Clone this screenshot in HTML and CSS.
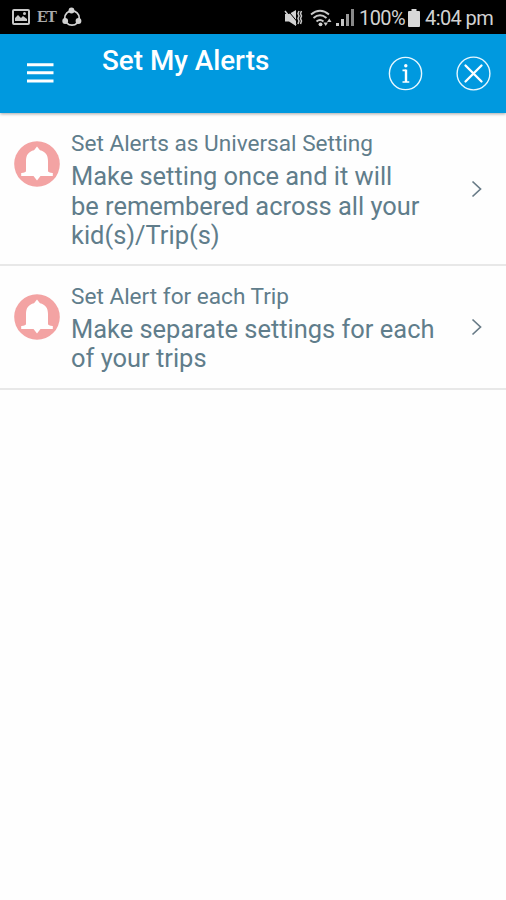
FILE: index.html
```html
<!DOCTYPE html>
<html lang="en">
<head>
    <meta charset="UTF-8">
    <meta name="viewport" content="width=device-width, initial-scale=1.0">
    <title>Set My Alerts</title>
    <link rel="stylesheet" href="styles.css">
</head>
<body>

    <div class="status-bar">
        <div class="status-left">
            <svg width="18" height="16" viewBox="0 0 18 16">
                <rect x="1" y="1" width="16" height="14" rx="1" fill="none" stroke="#c8c8c8" stroke-width="2"/>
                <path d="M3 12V9l3-3 3 3 2-2 4 3v2z" fill="#c8c8c8"/>
                <circle cx="12.500" cy="4.500" r="1.500" fill="#c8c8c8"/>
            </svg>
            <span class="status-et">ET</span>
            <svg width="20" height="20" viewBox="0 0 20 20">
                <circle cx="10" cy="11" r="7.200" fill="none" stroke="#d2d2d2" stroke-width="1.700"/>
                <circle cx="9.500" cy="3.500" r="2.900" fill="#d2d2d2"/>
                <circle cx="3.200" cy="14" r="2.900" fill="#d2d2d2"/>
                <circle cx="16.500" cy="14" r="2.900" fill="#d2d2d2"/>
            </svg>
        </div>
        <div class="status-right">
            <svg class="mute-icon" width="19" height="18" viewBox="0 0 19 18">
                <path d="M1 5h4l7-4v16l-7-4.500H1z" fill="#d2d2d2"/>
                <path d="M3.500 1l9.500 11.500" stroke="#000" stroke-width="1"/>
                <path d="M1 2l11 14" stroke="#d2d2d2" stroke-width="1.500"/>
                <path d="M15 2l-1 2.500L15 7l-1 2.500 1 2.500-1 3M17.500 2l-1 2.500 1 2.500-1 2.500 1 2.500-1 3" fill="none" stroke="#c8c8c8" stroke-width="1.500"/>
            </svg>
            <svg class="wifi-icon" width="23" height="18" viewBox="0 0 23 18">
                <path d="M1 5.500Q10-2 19 5.500M3.500 9q6.500-5.500 13 0M6.500 12.500q3.500-3 7 0" fill="none" stroke="#c8c8c8" stroke-width="1.900"/>
                <circle cx="10.500" cy="15.300" r="1.900" fill="#d2d2d2"/>
                <path d="M13.500 13.500h4.500L15.700 17zM17 13l2.300-3.500L21.500 13z" fill="#c8c8c8"/>
            </svg>
            <svg class="signal-icon" width="18" height="17" viewBox="0 0 18 17">
                <path d="M0 14h3v3H0zM5 10h3v7H5z" fill="#c8c8c8"/>
                <path d="M10 5h3v12h-3z" fill="#999"/>
                <path d="M15 0h3v17h-3z" fill="#888"/>
            </svg>
            <span class="battery-text">100%</span>
            <svg class="battery-icon" width="12" height="18" viewBox="0 0 12 18">
                <path d="M3.500 0h5v2H11q1 0 1 1v14q0 1-1 1H1q-1 0-1-1V3q0-1 1-1h2.500z" fill="#d8d8d8"/>
            </svg>
            <span class="clock">4:04 pm</span>
        </div>
    </div>

    <header class="toolbar">
        <svg class="menu-icon" width="27" height="20" viewBox="0 0 27 20">
            <path d="M0 1.700h26.500M0 9.800h26.500M0 18h26.500" stroke="#fff" stroke-width="3"/>
        </svg>
        <h1>Set My Alerts</h1>
        <svg class="info-icon" width="35" height="35" viewBox="0 0 35 35">
            <circle cx="17.500" cy="17.500" r="16.100" fill="none" stroke="#e6f7ff" stroke-width="1.400"/>
            <circle cx="17.800" cy="9.800" r="1.700" fill="#fff"/>
            <path d="M14.500 14.400h3.600M14.500 26h6.800" fill="none" stroke="#fff" stroke-width="1.600"/>
            <path d="M18 13.600v12.400" stroke="#fff" stroke-width="2.400"/>
        </svg>
        <svg class="close-icon" width="35" height="35" viewBox="0 0 35 35">
            <circle cx="17.500" cy="17.500" r="16.400" fill="none" stroke="#e6f7ff" stroke-width="1.400"/>
            <path d="M9.500 9.500l16 16M25.500 9.500l-16 16" stroke="#fff" stroke-width="2.300" stroke-linecap="round"/>
        </svg>
    </header>

    <main class="alert-list">
        <div class="alert-row">
            <svg class="bell-icon" width="46" height="46" viewBox="0 0 46 46">
                <circle cx="23" cy="23" r="22.800" fill="#f3a3a3"/>
                <path d="M23 5.500l3 3.700C31.500 10.500 34 14 34 20v10q0 1.500 4.800 2v3H26.500L23 39.500 19.500 35H7.200v-3q4.800-.5 4.800-2V20c0-6 2.500-9.500 8-10.800z" fill="#fff"/>
            </svg>
            <div class="alert-text">
                <h2>Set Alerts as Universal Setting</h2>
                <p>Make setting once and it will<br>be remembered across all your<br>kid(s)/Trip(s)</p>
            </div>
            <svg class="chevron" width="11" height="18" viewBox="0 0 11 18">
                <path d="M1.500 1.500L9.500 9l-8 7.500" fill="none" stroke="#687b87" stroke-width="1.700"/>
            </svg>
        </div>
        <div class="alert-row">
            <svg class="bell-icon" width="46" height="46" viewBox="0 0 46 46">
                <circle cx="23" cy="23" r="22.800" fill="#f3a3a3"/>
                <path d="M23 5.500l3 3.700C31.500 10.500 34 14 34 20v10q0 1.500 4.800 2v3H26.500L23 39.500 19.500 35H7.200v-3q4.800-.5 4.800-2V20c0-6 2.500-9.500 8-10.800z" fill="#fff"/>
            </svg>
            <div class="alert-text">
                <h2>Set Alert for each Trip</h2>
                <p>Make separate settings for each<br>of your trips</p>
            </div>
            <svg class="chevron" width="11" height="18" viewBox="0 0 11 18">
                <path d="M1.500 1.500L9.500 9l-8 7.500" fill="none" stroke="#687b87" stroke-width="1.700"/>
            </svg>
        </div>
    </main>

</body>
</html>
```
FILE: styles.css
```css
body {
    font-family: Roboto, sans-serif;
    margin: 0;
    padding: 0;
    background: #fefefe;
    color: #607d8b;
}
svg {
    display: block;
    flex: none;
}
.status-bar {
    display: flex;
    justify-content: space-between;
    align-items: center;
    height: 34px;
    padding: 0 13px 0 12px;
    box-sizing: border-box;
    background: #000;
    color: #d2d2d2;
    font-size: 20px;
    letter-spacing: -0.6px;
    white-space: nowrap;
}
.status-left, .status-right {
    display: flex;
    align-items: center;
}
.status-right {
    padding-top: 1px;
}
.status-et {
    width: 19px;
    margin: 0 6px 0 7px;
    color: #aaa;
    font-family: "Liberation Serif", serif;
    font-size: 16px;
    font-weight: bold;
    letter-spacing: -1.5px;
}
.wifi-icon {
    margin-left: 7px;
}
.signal-icon {
    margin-left: 3px;
}
.battery-text {
    width: 45px;
    margin-left: 5px;
}
.battery-icon {
    margin: 0 5px 0 4px;
}
.clock {
    width: 68px;
}
.toolbar {
    display: flex;
    align-items: flex-start;
    height: 79px;
    padding: 0 15.5px 0 26.5px;
    box-sizing: border-box;
    background: #0099df;
    box-shadow: 0 1px 3px rgba(0, 0, 0, 0.35);
    color: #fff;
}
.toolbar h1 {
    flex: 1;
    margin: 10px 0 0 48.5px;
    font-size: 27.8px;
    font-weight: 500;
    line-height: 33px;
    white-space: nowrap;
}
.menu-icon {
    margin-top: 29px;
}
.info-icon, .close-icon {
    margin-top: 22px;
}
.close-icon {
    margin-left: 32.5px;
}
.alert-row {
    display: flex;
    align-items: flex-start;
    padding: 17px 24px 13px 14px;
    border-bottom: 2px solid #e8e8e8;
}
.alert-row:last-child {
    padding-bottom: 14px;
}
.bell-icon {
    margin-top: 11px;
}
.alert-text {
    flex: 1;
    margin-left: 11px;
    white-space: nowrap;
}
.alert-text h2 {
    margin: 0;
    font-size: 22.6px;
    font-weight: 400;
    line-height: 27px;
}
.alert-text p {
    margin: 5px 0 0;
    font-size: 25.45px;
    line-height: 29.6px;
}
.chevron {
    align-self: center;
    margin-top: -2px;
}
```
